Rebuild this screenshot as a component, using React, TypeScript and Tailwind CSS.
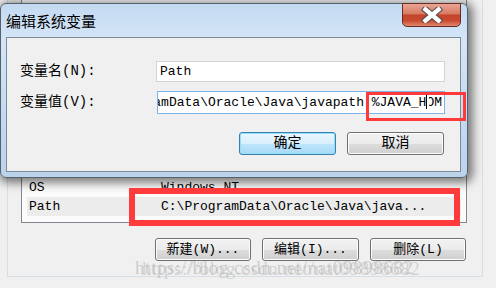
const mono = "font-['Liberation_Mono','Noto_Sans_CJK_SC',monospace]";

function WinButton({ label, primary = false, className = "" }: { label: string; primary?: boolean; className?: string }) {
  const base = "flex h-[23px] items-center justify-center rounded-[3px] border text-[13px] text-black";
  const look = primary
    ? "border-[#3c7fb1] bg-[linear-gradient(180deg,#eaf6fd_0%,#d9f0fc_50%,#bee6fd_51%,#a7d9f5_100%)] shadow-[inset_0_0_0_1px_#8fe0f8]"
    : "border-[#707070] bg-[linear-gradient(180deg,#f2f2f2_0%,#ebebeb_50%,#dddddd_51%,#cfcfcf_100%)] shadow-[inset_0_0_0_1px_#fcfcfc]";
  return <div className={`${base} ${look} ${mono} ${className}`}>{label}</div>;
}

function CloseGlyph() {
  return (
    <svg width="24" height="16" viewBox="0 0 24 16">
      <path d="M5.5 2.5 L18.5 13.5 M18.5 2.5 L5.5 13.5" stroke="#4b4b4b" strokeWidth="6.5" strokeLinecap="square" />
      <path d="M5.5 2.5 L18.5 13.5 M18.5 2.5 L5.5 13.5" stroke="#ffffff" strokeWidth="4.5" strokeLinecap="square" />
    </svg>
  );
}

export default function App() {
  return (
    <div className="relative h-[288px] w-[496px] overflow-hidden bg-[#f0f0f0]">
      {/* parent window: system variables group */}
      <div className="ml-[7px] flex h-[277px] w-[476px] flex-col border-x border-b border-[#d5dfe5]">
        <div className="ml-[13px] flex h-[223px] w-[446px] flex-col justify-end border-x border-b border-[#828790] bg-[#fbfbfb] pb-[6px]">
          <div className={`mx-[5px] flex h-[19px] items-center text-[13px] text-black ${mono}`}>
            <span className="w-[134px] pl-[2px]">OS</span>
            <span>Windows_NT</span>
          </div>
          <div className={`mx-[5px] flex h-[19px] items-center bg-[#ececec] text-[13px] text-black ${mono}`}>
            <span className="w-[134px] pl-[2px]">Path</span>
            <span>C:\ProgramData\Oracle\Java\java...</span>
          </div>
        </div>
        <div className="mt-[15px] flex justify-end gap-[11px] pr-[16px]">
          <WinButton label="新建(W)..." className="w-[96px]" />
          <WinButton label="编辑(I)..." className="w-[97px]" />
          <WinButton label="删除(L)" className="w-[96px]" />
        </div>
      </div>

      {/* watermark */}
      <div className="pointer-events-none absolute left-[135px] top-[254px] font-['Liberation_Serif',serif] text-[19px] tracking-[0.6px] text-[rgba(175,175,175,0.55)]">
        https://blog.csdn.net/nat09898682
      </div>
      <div className="pointer-events-none absolute left-[142px] top-[255px] font-['Liberation_Serif',serif] text-[19px] tracking-[0.6px] text-[rgba(175,175,175,0.45)]">
        https://blog.csdn.net/nat09898682
      </div>

      {/* edit dialog */}
      <div className="absolute left-0 top-[3px] flex h-[175px] w-[468px] flex-col rounded-[6px] border border-[#56616d] bg-[linear-gradient(180deg,#c3daf2_0%,#d4e5f7_20%,#c6dbf1_60%,#bcd3ec_100%)] shadow-[2px_2px_10px_3px_rgba(0,0,0,0.5)]">
        <div className="flex h-[33px] items-start">
          <div className="mt-[8px] pl-[5px] font-['Noto_Sans_CJK_SC',sans-serif] text-[15px] leading-[18px] text-black">
            编辑系统变量
          </div>
          <div className="-mt-px ml-auto mr-[6px] flex h-[24px] w-[59px] items-center justify-center rounded-b-[5px] border border-[#6b2a22] bg-[linear-gradient(180deg,#eaa594_0%,#d77a63_45%,#c3432b_50%,#c94a31_75%,#e0886e_100%)]">
            <CloseGlyph />
          </div>
        </div>
        <div className="ml-[5px] flex h-[135px] w-[455px] flex-col border border-[#7d8a97] bg-[#f0f0f0] pt-[23px]">
          <div className="flex items-center pl-[13px]">
            <span className={`w-[136px] text-[14px] text-black ${mono}`}>变量名(N):</span>
            <div className={`flex h-[21px] w-[289px] items-center border border-[#d4d4d4] bg-white pl-[3px] text-[13px] text-black ${mono}`}>
              Path
            </div>
          </div>
          <div className="mt-[9px] flex items-center pl-[13px]">
            <span className={`w-[137px] text-[14px] text-black ${mono}`}>变量值(V):</span>
            <div className={`flex h-[23px] w-[288px] items-center justify-end overflow-hidden whitespace-nowrap border border-[#7eb4ea] bg-white pr-[2px] text-[13px] text-black ${mono}`}>
              <span>ProgramData\Oracle\Java\javapath;%JAVA_H</span>
              <span className="relative">
                O
                <span className="absolute left-[1px] top-[3px] h-[11px] w-[2px] bg-white" />
                <span className="absolute left-0 top-[1px] h-[15px] w-px bg-black" />
              </span>
              <span>M</span>
            </div>
          </div>
          <div className="mt-[18px] flex justify-end gap-[11px] pr-[16px]">
            <WinButton label="确定" primary className="w-[97px] text-[14px]" />
            <WinButton label="取消" className="w-[97px] text-[14px]" />
          </div>
        </div>
      </div>

      {/* red highlight boxes */}
      <div className="absolute left-[366px] top-[92px] h-[29px] w-[100px] border-[3px] border-[#fe3a3a]" />
      <div className="absolute left-[129px] top-[188px] h-[38px] w-[331px] border-[6px] border-[#fe3a3a]" />
    </div>
  );
}
